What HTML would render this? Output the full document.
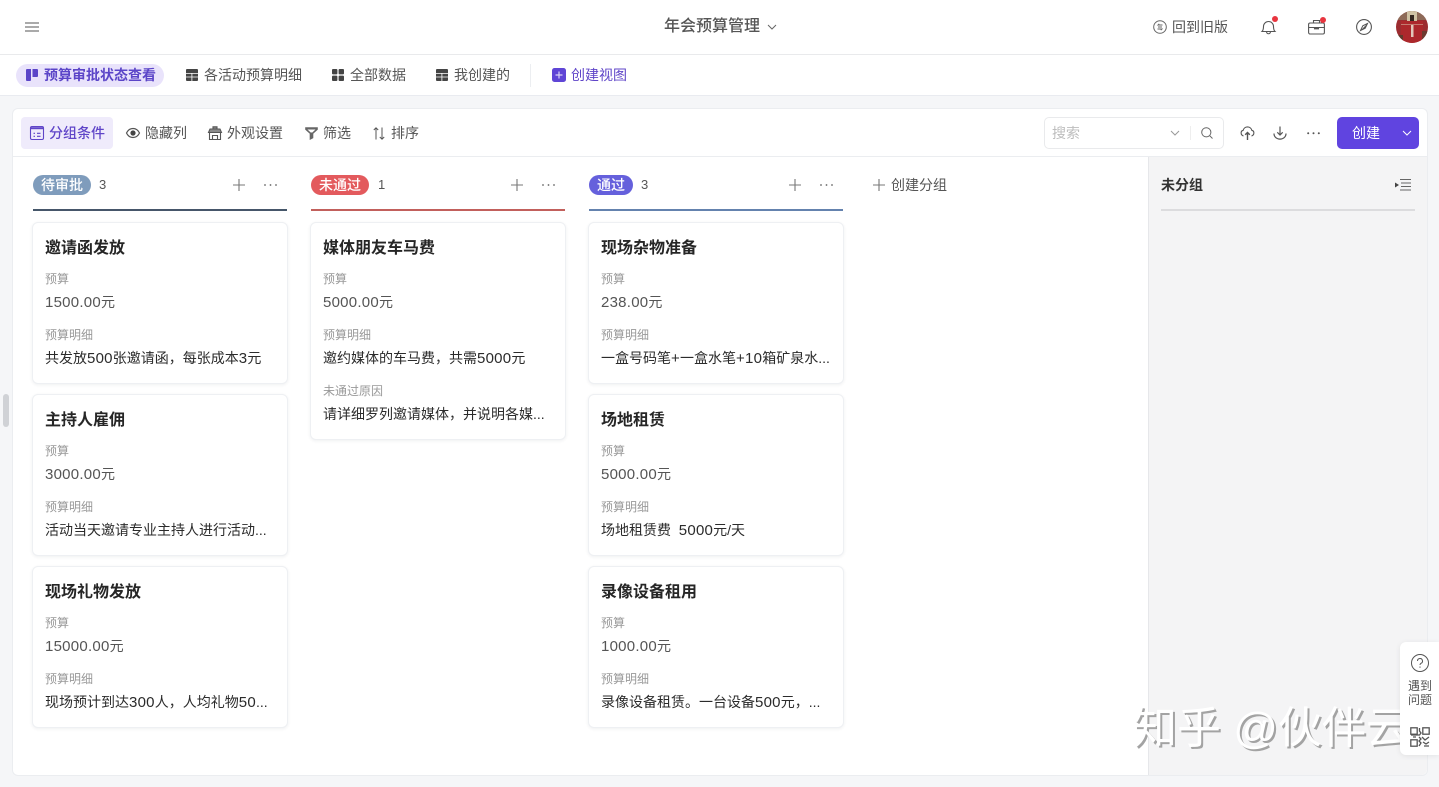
<!DOCTYPE html>
<html lang="zh"><head><meta charset="utf-8"><title>年会预算管理</title>
<style>
*{box-sizing:border-box}
html,body{margin:0;padding:0}
body{width:1439px;height:787px;position:relative;overflow:hidden;background:#f5f6f8;font-family:"Liberation Sans","Noto Sans CJK SC",sans-serif;color:#333}
.a{position:absolute;white-space:nowrap}
svg{position:absolute;overflow:visible}
.t{font-size:14px;line-height:20px;color:#555}
.card{position:absolute;width:256px;background:#fff;border:1px solid #eef0f3;border-radius:6px;box-shadow:0 1px 3px rgba(30,40,60,.07)}
.card .a{left:12px}
.ti{font-size:16px;font-weight:700;line-height:24px;color:#262626;top:12px}
.l{font-size:12px;line-height:18px;color:#999;margin-top:1px}
.v{font-size:14px;line-height:20px;color:#555}
.d{font-size:14px;line-height:20px;color:#2b2b2b}
.g{font-size:15px;line-height:1;letter-spacing:.25px}
.tag{position:absolute;top:175px;height:20px;border-radius:10px;color:#fff;font-size:14px;line-height:20px;text-align:center;font-weight:500}
.n{position:absolute;top:175px;font-size:13px;line-height:20px;color:#555}
.rule{position:absolute;top:209px;width:254px;height:2px}
</style></head><body>
<div class="a" style="left:0;top:0;width:1439px;height:55px;background:#fff;border-bottom:1px solid #e9eaec"></div>
<div class="a" style="left:0;top:55px;width:1439px;height:41px;background:#fff;border-bottom:1px solid #e9ebf0"></div>

<svg style="left:25px;top:22px" width="14" height="10" fill="none" stroke="#777" stroke-width="1.2"><path d="M0 1h14M0 5h14M0 9h14"/></svg>
<div class="a" style="left:664px;top:16px;font-size:16px;line-height:22px;color:#555;font-weight:500">年会预算管理</div>
<svg style="left:767px;top:24px" width="10" height="6" fill="none" stroke="#666" stroke-width="1"><path d="M1 1l4 4 4-4"/></svg>

<svg style="left:1153px;top:20px" width="14" height="14" fill="none" stroke="#666" stroke-width="1"><circle cx="7" cy="7" r="6.300"/><path d="M9.500 5H5L6.200 3.800M4.500 9H9L7.800 10.200M5 7h4"/></svg>
<div class="a t" style="left:1172px;top:17px;color:#555">回到旧版</div>
<svg style="left:1261px;top:19px" width="15" height="16" fill="none" stroke="#555" stroke-width="1.100"><path d="M1 12.500c1.500-1.500 1.500-3 1.500-5a5 5 0 0 1 10 0c0 2 0 3.500 1.500 5zM5.500 12.500c0 3 4 3 4 0"/></svg>
<div class="a" style="left:1272px;top:16px;width:6px;height:6px;border-radius:50%;background:#e8353f"></div>
<svg style="left:1308px;top:19px" width="17" height="16" fill="none" stroke="#555" stroke-width="1.100"><rect x=".6" y="4" width="15.800" height="11" rx="1.500"/><path d="M.6 8.500h15.800M5.500 4V1.500h6V4"/><path d="M6.500 8.500h4v1.300h-4z" fill="#555"/></svg>
<div class="a" style="left:1320px;top:17px;width:6px;height:6px;border-radius:50%;background:#e8353f"></div>
<svg style="left:1356px;top:19px" width="16" height="16" fill="none" stroke="#555" stroke-width="1.100"><circle cx="8" cy="8" r="7.400"/><path d="M11.500 4.500L9.200 9.200 4.500 11.500l2.300-4.700z" stroke-width="1"/><path d="M11.500 4.500L4.500 11.500 9.200 9.200z" fill="#555" stroke="none"/></svg>
<svg style="left:1396px;top:11px" width="32" height="32"><defs><clipPath id="av"><circle cx="16" cy="16" r="16"/></clipPath></defs><g clip-path="url(#av)"><rect width="32" height="32" fill="#9c2c30"/><rect width="32" height="9" fill="#8d6a58"/><rect x="11" y="0" width="10" height="11" fill="#cfc2a4"/><rect x="14" y="4" width="4" height="6" fill="#33261f"/><rect x="5" y="10" width="22" height="22" fill="#ac282c"/><rect x="15" y="14" width="2.500" height="12" fill="#e2c8ba"/><rect x="5" y="13" width="22" height="1" fill="#c47a70"/><rect x="0" y="24" width="7" height="8" fill="#5f3a2c"/><rect x="26" y="20" width="6" height="12" fill="#6d3a30"/></g></svg>

<div class="a" style="left:16px;top:64px;width:148px;height:23px;border-radius:12px;background:#e9e3fb"></div>
<svg style="left:26px;top:69px" width="12" height="12" fill="#5b45c8"><path d="M0 1q0-1 1-1h4v11q0 1-1 1H1q-1 0-1-1zM6.500 0H11q1 0 1 1v6q0 1-1 1H6.500z"/></svg>
<div class="a t" style="left:44px;top:65px;color:#5b45c8;font-weight:700">预算审批状态查看</div>
<svg style="left:186px;top:69px" width="12" height="12" fill="#444"><path d="M1 0h10q1 0 1 1v3H0V1q0-1 1-1zM0 4.800h5.500v2.800H0zM6.300 4.800H12v2.800H6.300zM0 8.400h5.500V12H1q-1 0-1-1zM6.300 8.400H12V11q0 1-1 1H6.300z"/></svg>
<div class="a t" style="left:204px;top:65px">各活动预算明细</div>
<svg style="left:332px;top:69px" width="12" height="12" fill="#444"><rect width="5.400" height="5.400" rx="1"/><rect x="6.600" width="5.400" height="5.400" rx="1"/><rect y="6.600" width="5.400" height="5.400" rx="1"/><rect x="6.600" y="6.600" width="5.400" height="5.400" rx="1"/></svg>
<div class="a t" style="left:350px;top:65px">全部数据</div>
<svg style="left:436px;top:69px" width="12" height="12" fill="#444"><path d="M1 0h10q1 0 1 1v3H0V1q0-1 1-1zM0 4.800h5.500v2.800H0zM6.300 4.800H12v2.800H6.300zM0 8.400h5.500V12H1q-1 0-1-1zM6.300 8.400H12V11q0 1-1 1H6.300z"/></svg>
<div class="a t" style="left:454px;top:65px">我创建的</div>
<div class="a" style="left:530px;top:64px;width:1px;height:23px;background:#eceef1"></div>
<svg style="left:552px;top:68px" width="14" height="14"><rect width="14" height="14" rx="2.500" fill="#5f45d6"/><path d="M7 3.500v7M3.500 7h7" stroke="#d9d2f7" stroke-width="1.200"/></svg>
<div class="a t" style="left:571px;top:65px;color:#5f45c8">创建视图</div>

<div class="a" style="left:12px;top:108px;width:1416px;height:668px;background:#fff;border:1px solid #ebedf0;border-radius:6px"></div>
<div class="a" style="left:13px;top:156px;width:1414px;height:1px;background:#ebedf0"></div>
<div class="a" style="left:1148px;top:157px;width:279px;height:618px;background:#f4f4f5;border-left:1px solid #e6e7ea;border-radius:0 0 6px 0"></div>
<div class="a" style="left:3px;top:394px;width:6px;height:33px;border-radius:3px;background:#d0d2d6"></div>

<div class="a" style="left:21px;top:117px;width:92px;height:32px;border-radius:4px;background:#efebfb"></div>
<svg style="left:30px;top:126px" width="14" height="14" fill="none" stroke="#5f45c8" stroke-width="1.100"><rect x=".5" y=".5" width="13" height="13" rx="1.500"/><path d="M1 2.200h12" stroke-width="2"/><path d="M3.500 7.300h1.500M7 7.300h3.500M3.500 10.300h1.500M7 10.300h3.500"/></svg>
<div class="a t" style="left:49px;top:123px;color:#5f45c8;font-weight:500">分组条件</div>
<svg style="left:126px;top:127px" width="14" height="12" fill="none" stroke="#555" stroke-width="1.200"><path d="M.5 6C3.500 0 10.500 0 13.500 6 10.500 12 3.500 12 .5 6z"/><circle cx="7" cy="6" r="2.600" fill="#444" stroke="none"/></svg>
<div class="a t" style="left:145px;top:123px">隐藏列</div>
<svg style="left:208px;top:126px" width="14" height="14" fill="none" stroke="#555" stroke-width="1.100"><path d="M1.500 7v6.500h11V7M4.500 13.500V9.500h5v4"/><path d="M.5 6.500L2 3h10l1.500 3.500zM5 3V.8h4V3" fill="#8a8a8a"/></svg>
<div class="a t" style="left:227px;top:123px">外观设置</div>
<svg style="left:305px;top:127px" width="13" height="13" fill="#666" stroke="#666" stroke-width=".6"><path d="M.5.500h12v2L8 6.500v4.500l-3 1.500v-6L.5 2.500z"/><path d="M2.500 2.500h8L7.300 5.500H5.700z" fill="#fff" stroke="none"/></svg>
<div class="a t" style="left:323px;top:123px">筛选</div>
<svg style="left:373px;top:127px" width="12" height="13" fill="none" stroke="#555" stroke-width="1"><path d="M3 12.500V.8M.8 3L3 .8 5.200 3M9 .5v11.700M6.800 10L9 12.200 11.200 10"/></svg>
<div class="a t" style="left:391px;top:123px">排序</div>

<div class="a" style="left:1044px;top:117px;width:180px;height:32px;background:#fff;border:1px solid #e9eaec;border-radius:5px"></div>
<div class="a t" style="left:1052px;top:123px;color:#bdbdbd">搜索</div>
<svg style="left:1170px;top:130px" width="10" height="6" fill="none" stroke="#999" stroke-width="1"><path d="M1 1l4 4 4-4"/></svg>
<div class="a" style="left:1190px;top:126px;width:1px;height:14px;background:#eee"></div>
<svg style="left:1201px;top:127px" width="12" height="12" fill="none" stroke="#666" stroke-width="1"><circle cx="5.300" cy="5.300" r="4.600"/><path d="M8.700 8.700L11.500 11.500"/></svg>
<svg style="left:1240px;top:126px" width="15" height="14" fill="none" stroke="#555" stroke-width="1.100"><path d="M3.500 10C.5 9 .3 5 3.200 4.300c1-4.500 7.600-4.500 8.600 0C14.700 5 14.500 9 11.500 10"/><path d="M7.500 14V6.500M5.200 8.800l2.300-2.300 2.300 2.300" stroke-width="1.400"/></svg>
<svg style="left:1273px;top:126px" width="14" height="14" fill="none" stroke="#555" stroke-width="1.200"><path d="M7 .5v8.500M4.300 6.300L7 9l2.700-2.700M1 7.500c0 7.500 12 7.500 12 0"/></svg>
<svg style="left:1307px;top:132px" width="13" height="3" fill="#555"><circle cx="1.200" cy="1.200" r="1"/><circle cx="6.500" cy="1.200" r="1"/><circle cx="11.800" cy="1.200" r="1"/></svg>
<div class="a" style="left:1337px;top:117px;width:82px;height:32px;background:#6044e0;border-radius:5px"></div>
<div class="a t" style="left:1352px;top:123px;color:#fff">创建</div>
<svg style="left:1402px;top:130px" width="10" height="6" fill="none" stroke="#fff" stroke-width="1"><path d="M1 1l4 4 4-4"/></svg>

<div class="tag" style="left:33px;width:58px;background:#7f9cbc">待审批</div>
<div class="n" style="left:99px">3</div>
<svg style="left:232px;top:178px" width="14" height="14" stroke="#777" stroke-width="1.100"><path d="M7 1v12M1 7h12"/></svg>
<svg style="left:264px;top:184px" width="13" height="2" fill="#666"><circle cx="1" cy="1" r=".9"/><circle cx="6.500" cy="1" r=".9"/><circle cx="12" cy="1" r=".9"/></svg>
<div class="rule" style="left:33px;background:#46566a"></div>

<div class="tag" style="left:311px;width:58px;background:#e35a5d">未通过</div>
<div class="n" style="left:378px">1</div>
<svg style="left:510px;top:178px" width="14" height="14" stroke="#777" stroke-width="1.100"><path d="M7 1v12M1 7h12"/></svg>
<svg style="left:542px;top:184px" width="13" height="2" fill="#666"><circle cx="1" cy="1" r=".9"/><circle cx="6.500" cy="1" r=".9"/><circle cx="12" cy="1" r=".9"/></svg>
<div class="rule" style="left:311px;background:#c2605c"></div>

<div class="tag" style="left:589px;width:44px;background:#6560dc">通过</div>
<div class="n" style="left:641px">3</div>
<svg style="left:788px;top:178px" width="14" height="14" stroke="#777" stroke-width="1.100"><path d="M7 1v12M1 7h12"/></svg>
<svg style="left:820px;top:184px" width="13" height="2" fill="#666"><circle cx="1" cy="1" r=".9"/><circle cx="6.500" cy="1" r=".9"/><circle cx="12" cy="1" r=".9"/></svg>
<div class="rule" style="left:589px;background:#6482ae"></div>

<svg style="left:872px;top:178px" width="14" height="14" stroke="#777" stroke-width="1.100"><path d="M7 1v12M1 7h12"/></svg>
<div class="a t" style="left:891px;top:175px">创建分组</div>

<div class="a" style="left:1161px;top:175px;font-size:14px;line-height:20px;font-weight:700;color:#333">未分组</div>
<svg style="left:1395px;top:179px" width="16" height="12" fill="none" stroke="#666" stroke-width="1"><path d="M5 .5h11M6 4h10M6 7.500h10M5 11h11"/><path d="M0 3.500L4 6 0 8.500z" fill="#444" stroke="none"/></svg>
<div class="a" style="left:1161px;top:209px;width:254px;height:2px;background:#dcdcde"></div>

<!-- column 1 -->
<div class="card" style="left:32px;top:222px;height:162px"><div class="a ti" style="top:14px">邀请函发放</div><div class="a l" style="top:46px">预算</div><div class="a v" style="top:69px"><span class="g">1500.00</span>元</div><div class="a l" style="top:102px">预算明细</div><div class="a d" style="top:125px">共发放<span class="g">500</span>张邀请函，每张成本<span class="g">3</span>元</div></div>
<div class="card" style="left:32px;top:394px;height:162px"><div class="a ti" style="top:14px">主持人雇佣</div><div class="a l" style="top:46px">预算</div><div class="a v" style="top:69px"><span class="g">3000.00</span>元</div><div class="a l" style="top:102px">预算明细</div><div class="a d" style="top:125px">活动当天邀请专业主持人进行活动...</div></div>
<div class="card" style="left:32px;top:566px;height:162px"><div class="a ti" style="top:14px">现场礼物发放</div><div class="a l" style="top:46px">预算</div><div class="a v" style="top:69px"><span class="g">15000.00</span>元</div><div class="a l" style="top:102px">预算明细</div><div class="a d" style="top:125px">现场预计到达<span class="g">300</span>人，人均礼物<span class="g">50</span>...</div></div>
<!-- column 2 -->
<div class="card" style="left:310px;top:222px;height:218px"><div class="a ti" style="top:14px">媒体朋友车马费</div><div class="a l" style="top:46px">预算</div><div class="a v" style="top:69px"><span class="g">5000.00</span>元</div><div class="a l" style="top:102px">预算明细</div><div class="a d" style="top:125px">邀约媒体的车马费，共需<span class="g">5000</span>元</div><div class="a l" style="top:158px">未通过原因</div><div class="a d" style="top:181px">请详细罗列邀请媒体，并说明各媒...</div></div>
<!-- column 3 -->
<div class="card" style="left:588px;top:222px;height:162px"><div class="a ti" style="top:14px">现场杂物准备</div><div class="a l" style="top:46px">预算</div><div class="a v" style="top:69px"><span class="g">238.00</span>元</div><div class="a l" style="top:102px">预算明细</div><div class="a d" style="top:125px">一盒号码笔<span class="g">+</span>一盒水笔<span class="g">+10</span>箱矿泉水...</div></div>
<div class="card" style="left:588px;top:394px;height:162px"><div class="a ti" style="top:14px">场地租赁</div><div class="a l" style="top:46px">预算</div><div class="a v" style="top:69px"><span class="g">5000.00</span>元</div><div class="a l" style="top:102px">预算明细</div><div class="a d" style="top:125px;white-space:pre">场地租赁费  <span class="g">5000</span>元/天</div></div>
<div class="card" style="left:588px;top:566px;height:162px"><div class="a ti" style="top:14px">录像设备租用</div><div class="a l" style="top:46px">预算</div><div class="a v" style="top:69px"><span class="g">1000.00</span>元</div><div class="a l" style="top:102px">预算明细</div><div class="a d" style="top:125px">录像设备租赁。一台设备<span class="g">500</span>元，...</div></div>

<!-- watermark -->
<div class="a" style="left:1133px;top:704px;font-size:44px;line-height:50px;color:#fff;text-shadow:2px 2px 0 #a3a3a3">知乎 @伙伴云</div>

<!-- help panel -->
<div class="a" style="left:1400px;top:642px;width:39px;height:113px;background:#fff;border-radius:6px 0 0 6px;box-shadow:0 1px 6px rgba(0,0,0,.08)"></div>
<svg style="left:1411px;top:654px" width="18" height="18" fill="none" stroke="#555" stroke-width="1"><circle cx="9" cy="9" r="8.500"/><path d="M6.500 7a2.500 2.500 0 1 1 3.500 2.300c-.7.300-1 .8-1 1.700M9 12.500v1.200"/></svg>
<div class="a" style="left:1408px;top:679px;width:24px;font-size:12px;line-height:14px;color:#555;white-space:normal;text-align:center">遇到问题</div>
<svg style="left:1410px;top:727px" width="20" height="20" fill="none" stroke="#555" stroke-width="1.300"><rect x=".8" y=".8" width="6.400" height="6.400"/><rect x="12.800" y=".8" width="6.400" height="6.400"/><rect x=".8" y="12.800" width="6.400" height="6.400"/><path d="M9.500 1v3l1.500 2-1.500 2H1M3 10h3M9 10l2 2-2 2 2 2-2 3M12 10l3 3 4-3M13 15l3 2 3-2M14 19h5"/></svg>
</body></html>
